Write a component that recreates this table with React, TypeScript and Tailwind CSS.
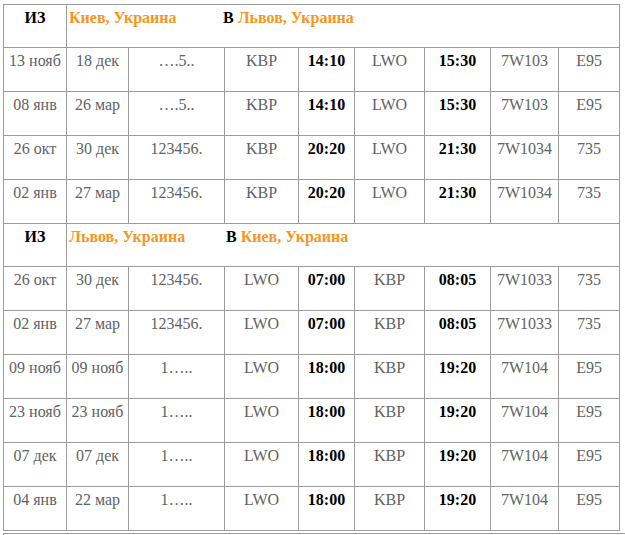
type Row = [string, string, string, string, string, string, string, string, string];

const kievLviv: Row[] = [
  ['13 нояб', '18 дек', '….5..', 'KBP', '14:10', 'LWO', '15:30', '7W103', 'E95'],
  ['08 янв', '26 мар', '….5..', 'KBP', '14:10', 'LWO', '15:30', '7W103', 'E95'],
  ['26 окт', '30 дек', '123456.', 'KBP', '20:20', 'LWO', '21:30', '7W1034', '735'],
  ['02 янв', '27 мар', '123456.', 'KBP', '20:20', 'LWO', '21:30', '7W1034', '735'],
];

const lvivKiev: Row[] = [
  ['26 окт', '30 дек', '123456.', 'LWO', '07:00', 'KBP', '08:05', '7W1033', '735'],
  ['02 янв', '27 мар', '123456.', 'LWO', '07:00', 'KBP', '08:05', '7W1033', '735'],
  ['09 нояб', '09 нояб', '1…..', 'LWO', '18:00', 'KBP', '19:20', '7W104', 'E95'],
  ['23 нояб', '23 нояб', '1…..', 'LWO', '18:00', 'KBP', '19:20', '7W104', 'E95'],
  ['07 дек', '07 дек', '1…..', 'LWO', '18:00', 'KBP', '19:20', '7W104', 'E95'],
  ['04 янв', '22 мар', '1…..', 'LWO', '18:00', 'KBP', '19:20', '7W104', 'E95'],
];

const cell = 'border border-[#9c9c9c] align-top pt-[4px] px-0 text-center whitespace-nowrap';

function Header({ from, to, gap }: { from: string; to: string; gap: string }) {
  return (
    <tr className="h-[43px]">
      <td className={`${cell} font-bold text-black`}>ИЗ</td>
      <td colSpan={8} className="border border-[#9c9c9c] align-top pt-[4px] pl-[2px] text-left font-bold whitespace-nowrap">
        <span className={`inline-block ${gap} text-[#f7961e]`}>{from}</span>
        <span className="text-black">В </span>
        <span className="text-[#f7961e]">{to}</span>
      </td>
    </tr>
  );
}

function DataRow({ row }: { row: Row }) {
  return (
    <tr className="h-[44px]">
      {row.map((v, i) => (
        <td
          key={i}
          className={`${cell} ${i === 4 || i === 6 ? 'font-bold text-black' : 'text-[#626262]'}`}
        >
          {v}
        </td>
      ))}
    </tr>
  );
}

export default function App() {
  return (
    <div className="w-[625px] h-[535px] overflow-hidden bg-white pt-[4px] pl-[3px] font-['Liberation_Serif','Times_New_Roman',serif] text-[16px] leading-[18px]">
      <table className="table-fixed border-collapse w-[616px]">
        <colgroup>
          <col className="w-[63px]" />
          <col className="w-[62px]" />
          <col className="w-[96px]" />
          <col className="w-[74px]" />
          <col className="w-[56px]" />
          <col className="w-[70px]" />
          <col className="w-[66px]" />
          <col className="w-[68px]" />
          <col className="w-[61px]" />
        </colgroup>
        <tbody>
          <Header from="Киев, Украина" to="Львов, Украина" gap="w-[154px]" />
          {kievLviv.map((r, i) => (
            <DataRow key={i} row={r} />
          ))}
          <Header from="Львов, Украина" to="Киев, Украина" gap="w-[157px]" />
          {lvivKiev.map((r, i) => (
            <DataRow key={i} row={r} />
          ))}
        </tbody>
      </table>
      <div className="mt-[2px] h-[10px] border-t border-l border-[#9c9c9c]" />
    </div>
  );
}
